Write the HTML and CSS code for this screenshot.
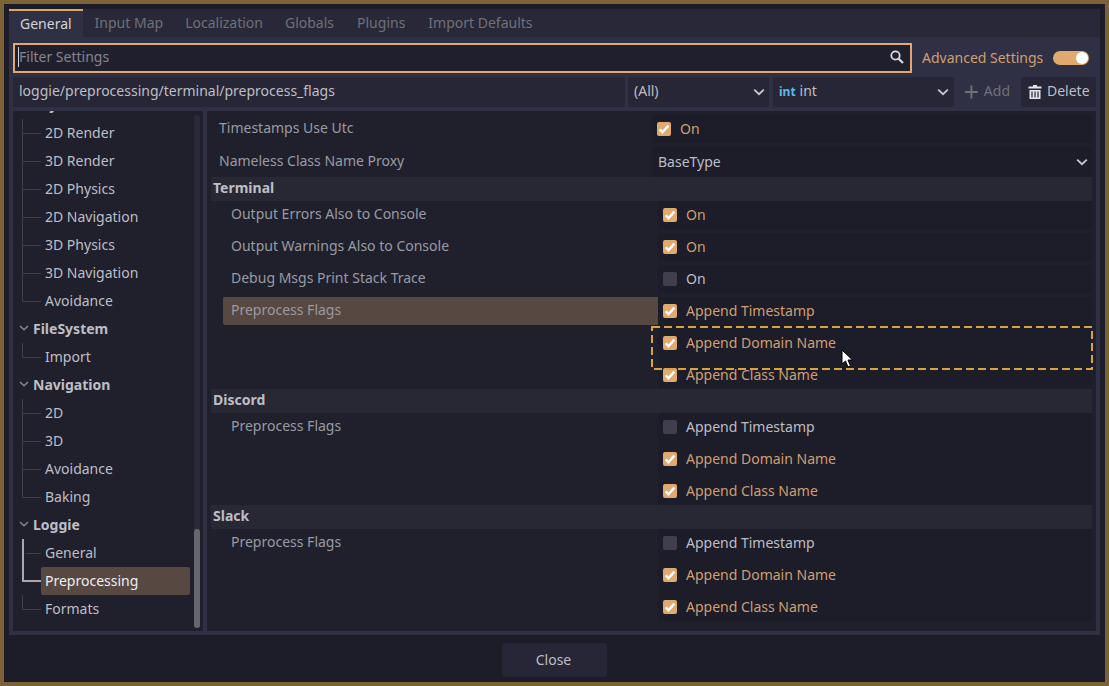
FILE: index.html
```html
<!DOCTYPE html>
<html lang="en">
<head>
  <meta charset="UTF-8" />
  <title>Project Settings</title>
  <link rel="stylesheet" href="styles.css">
</head>
<body>

  <svg class="defs" width="0" height="0">
    <symbol id="tick" viewBox="0 0 14 14">
      <path d="M2.8 7.4 L5.5 10.3 L11.4 3.6" fill="none" stroke="#fff" stroke-width="2.4" />
    </symbol>
    <symbol id="chevron" viewBox="0 0 12 12">
      <path d="M1.2 3.6 L6 8.2 L10.8 3.6" fill="none" stroke="#c8c8cc" stroke-width="1.8" />
    </symbol>
  </svg>

  <div class="window">
    <div class="tabs">
      <div class="tab active">General</div>
      <div class="tab">Input Map</div>
      <div class="tab">Localization</div>
      <div class="tab">Globals</div>
      <div class="tab nudge">Plugins</div>
      <div class="tab nudge">Import Defaults</div>
    </div>

    <div class="panel">
      <div class="toolbar">
        <div class="filter">
          <span class="caret"></span>
          <span class="filter-text">Filter Settings</span>
          <svg class="search" width="16" height="16" viewBox="0 0 16 16">
            <circle cx="6.5" cy="6.5" r="4.2" fill="none" stroke="#dcdce0" stroke-width="1.8" />
            <path d="M9.7 9.7 L14 14" stroke="#dcdce0" stroke-width="2.2" />
          </svg>
        </div>
        <span class="advanced">Advanced Settings</span>
        <span class="toggle"><span class="knob"></span></span>
      </div>

      <div class="toolbar addbar">
        <div class="path">loggie/preprocessing/terminal/preprocess_flags</div>
        <div class="select feature"><span class="select-text">(All)</span><svg class="chev"><use href="#chevron" /></svg></div>
        <div class="select kind"><span class="int-icon">int</span><span class="select-text">int</span><svg class="chev"><use href="#chevron" /></svg></div>
        <div class="add">
          <svg width="16" height="16" viewBox="0 0 16 16"><path d="M8 1 V15 M1 8 H15" stroke="#70707a" stroke-width="2" /></svg>
          <span class="btn-text">Add</span>
        </div>
        <div class="delete">
          <svg width="14" height="16" viewBox="0 0 14 16">
            <path d="M5 1 H9 V2.5 H13.5 V4.5 H.5 V2.5 H5 Z" fill="#e4e4e8" />
            <path d="M1.5 6 H12.5 V15 H1.5 Z" fill="#e4e4e8" />
            <path d="M4 7.5 V13.5 M7 7.5 V13.5 M10 7.5 V13.5" stroke="#262636" stroke-width="1.2" />
          </svg>
          <span class="btn-text">Delete</span>
        </div>
      </div>

      <div class="content">
        <div class="tree">
          <div class="tree-list">
            <div class="tree-head cut"><span class="head-text">Layer Names</span></div>
            <div class="leaf"><span class="branch"></span>2D Render</div>
            <div class="leaf"><span class="branch"></span>3D Render</div>
            <div class="leaf"><span class="branch"></span>2D Physics</div>
            <div class="leaf"><span class="branch"></span>2D Navigation</div>
            <div class="leaf"><span class="branch"></span>3D Physics</div>
            <div class="leaf"><span class="branch"></span>3D Navigation</div>
            <div class="leaf"><span class="branch last"></span>Avoidance</div>
            <div class="tree-head"><svg class="fold"><use href="#chevron" /></svg><span>FileSystem</span></div>
            <div class="leaf"><span class="branch last"></span>Import</div>
            <div class="tree-head"><svg class="fold"><use href="#chevron" /></svg><span>Navigation</span></div>
            <div class="leaf"><span class="branch"></span>2D</div>
            <div class="leaf"><span class="branch"></span>3D</div>
            <div class="leaf"><span class="branch"></span>Avoidance</div>
            <div class="leaf"><span class="branch last"></span>Baking</div>
            <div class="tree-head"><svg class="fold"><use href="#chevron" /></svg><span>Loggie</span></div>
            <div class="leaf"><span class="branch lit"></span>General</div>
            <div class="leaf selected"><span class="branch lit-end"></span><span class="leaf-name">Preprocessing</span></div>
            <div class="leaf"><span class="branch last"></span>Formats</div>
          </div>
          <div class="scrollbar"><div class="thumb"></div></div>
        </div>

        <div class="props">
          <div class="row plain first">
            <div class="label">Timestamps Use Utc</div>
            <div class="value"><span class="check on"><svg><use href="#tick" /></svg></span><span class="opt on-text">On</span></div>
          </div>
          <div class="row plain second">
            <div class="label tall">Nameless Class Name Proxy</div>
            <div class="value dropdown"><span class="opt">BaseType</span><svg class="chev"><use href="#chevron" /></svg></div>
          </div>

          <div class="section">Terminal</div>
          <div class="row">
            <div class="label">Output Errors Also to Console</div>
            <div class="value"><span class="check on"><svg><use href="#tick" /></svg></span><span class="opt on-text">On</span></div>
          </div>
          <div class="row">
            <div class="label">Output Warnings Also to Console</div>
            <div class="value"><span class="check on"><svg><use href="#tick" /></svg></span><span class="opt on-text">On</span></div>
          </div>
          <div class="row">
            <div class="label">Debug Msgs Print Stack Trace</div>
            <div class="value"><span class="check"></span><span class="opt">On</span></div>
          </div>
          <div class="row flags">
            <div class="label picked">Preprocess Flags</div>
            <div class="flag-list">
              <div class="flag"><span class="check on"><svg><use href="#tick" /></svg></span><span class="opt on-text">Append Timestamp</span></div>
              <div class="flag"><span class="check on"><svg><use href="#tick" /></svg></span><span class="opt on-text">Append Domain Name</span></div>
              <div class="flag"><span class="check on"><svg><use href="#tick" /></svg></span><span class="opt on-text">Append Class Name</span></div>
            </div>
          </div>

          <div class="section">Discord</div>
          <div class="row flags">
            <div class="label">Preprocess Flags</div>
            <div class="flag-list">
              <div class="flag"><span class="check"></span><span class="opt">Append Timestamp</span></div>
              <div class="flag"><span class="check on"><svg><use href="#tick" /></svg></span><span class="opt on-text">Append Domain Name</span></div>
              <div class="flag"><span class="check on"><svg><use href="#tick" /></svg></span><span class="opt on-text">Append Class Name</span></div>
            </div>
          </div>

          <div class="section">Slack</div>
          <div class="row flags">
            <div class="label">Preprocess Flags</div>
            <div class="flag-list">
              <div class="flag"><span class="check"></span><span class="opt">Append Timestamp</span></div>
              <div class="flag"><span class="check on"><svg><use href="#tick" /></svg></span><span class="opt on-text">Append Domain Name</span></div>
              <div class="flag"><span class="check on"><svg><use href="#tick" /></svg></span><span class="opt on-text">Append Class Name</span></div>
            </div>
          </div>
        </div>
      </div>
    </div>

    <div class="footer">
      <div class="close">Close</div>
    </div>

    <!-- drop hint and mouse pointer sit on top of the rows -->
    <svg class="drop-hint" width="442" height="44" viewBox="0 0 442 44">
      <rect x="1" y="1" width="440" height="42" fill="none" stroke="#d9a43f" stroke-width="2" stroke-dasharray="8 4" />
    </svg>
    <svg class="pointer" width="13" height="20" viewBox="0 0 13 20">
      <path d="M1 1 V15 L4.5 12 L7 18 L9.5 17 L7 11 H11.5 Z" fill="#fff" stroke="#000" stroke-width="1" />
    </svg>
  </div>

</body>
</html>
```

FILE: styles.css
```css
* {
  box-sizing: border-box;
}
html, body {
  margin: 0;
  padding: 0;
}
body {
  font-family: "Noto Sans", sans-serif;
  font-size: 14px;
  color: #bebec5;
  background: #1d1c29;
}
.defs {
  position: absolute;
}
.window {
  position: relative;
  width: 1109px;
  height: 686px;
  padding: 5px;
  background: #1d1c29;
  border: 4px solid #7d6238;
  display: flex;
  flex-direction: column;
  overflow: hidden;
}

/* tabs */
.tabs {
  display: flex;
  flex: none;
  height: 28px;
  width: 1091px;
  background: #282838;
}
.tab {
  padding: 0 11px;
  line-height: 28px;
  color: #6f7079;
}
.tab.active {
  margin-right: 1px;
  color: #d4d4d8;
  background: #2f3043;
  border-top: 2px solid #dba66c;
  line-height: 25px;
}
.tab.nudge {
  margin-left: 1px;
}

/* main panel */
.panel {
  width: 1091px;
  height: 598px;
  flex: none;
  background: #2f3043;
  padding: 6px 4px 4px;
  display: flex;
  flex-direction: column;
  gap: 4px;
}
.toolbar {
  display: flex;
  align-items: center;
  height: 30px;
  flex: none;
}
.filter {
  width: 899px;
  height: 30px;
  display: flex;
  align-items: center;
  background: #201f2d;
  border: 2px solid #e0a96f;
  padding: 0 3px 2px 3px;
}
.caret {
  width: 1px;
  height: 20px;
  background: #d8d8dc;
}
.filter-text {
  flex: 1;
  margin-bottom: 2px;
  color: #85858d;
}
.search {
  margin-right: 2px;
}
.advanced {
  margin-left: 10px;
  margin-bottom: 2px;
  width: 131px;
  color: #cf9f71;
}
.toggle {
  width: 36px;
  height: 14px;
  border-radius: 7px;
  background: #e0a96f;
  display: flex;
  justify-content: flex-end;
  align-items: center;
  padding-right: 1px;
}
.knob {
  width: 12px;
  height: 12px;
  border-radius: 6px;
  background: #fff;
}

.path, .select {
  height: 30px;
  line-height: 28px;
  background: #262636;
  border-radius: 2px;
}
.path {
  width: 612px;
  padding-left: 6px;
}
.select {
  display: flex;
  align-items: center;
  padding: 0 4px 0 6px;
}
.select-text {
  flex: 1;
  margin-bottom: 2px;
}
.feature {
  width: 141px;
  margin-left: 3px;
}
.kind {
  width: 181px;
  margin-left: 4px;
  padding-right: 5px;
}
.int-icon {
  margin-right: 4px;
  font-size: 12px;
  font-weight: 700;
  color: #5abbef;
}
.chev {
  width: 12px;
  height: 12px;
  flex: none;
}
.add {
  width: 46px;
  margin-left: 10px;
  display: flex;
  align-items: center;
  gap: 5px;
  color: #6f7079;
}
.btn-text {
  margin-bottom: 4px;
}
.delete {
  width: 75px;
  height: 30px;
  margin-left: 11px;
  display: flex;
  align-items: center;
  gap: 5px;
  padding-left: 7px;
  background: #262636;
  border-radius: 2px;
}

/* section tree */
.content {
  display: flex;
  gap: 4px;
  height: 520px;
  flex: none;
}
.tree {
  width: 190px;
  display: flex;
  background: #20202d;
  overflow: hidden;
}
.tree-list {
  width: 177px;
  margin-top: -20px;
}
.leaf, .tree-head {
  height: 28px;
  padding-bottom: 2px;
  line-height: 27px;
  display: flex;
  align-items: center;
}
.tree-head {
  font-weight: 700;
  padding-left: 6px;
}
.tree-head.cut {
  padding-left: 20px;
}
.fold {
  width: 10px;
  height: 10px;
  margin-right: 4px;
  opacity: 0.6;
}
.leaf {
  padding-left: 9px;
}
.branch {
  flex: none;
  align-self: flex-start;
  width: 19px;
  height: 28px;
  margin-right: 4px;
  background:
    linear-gradient(#3f3f4c, #3f3f4c) 0 0 / 1px 100% no-repeat,
    linear-gradient(#3f3f4c, #3f3f4c) 0 14px / 100% 1px no-repeat;
}
.branch.last {
  background:
    linear-gradient(#3f3f4c, #3f3f4c) 0 0 / 1px 15px no-repeat,
    linear-gradient(#3f3f4c, #3f3f4c) 0 14px / 100% 1px no-repeat;
}
.branch.lit {
  background:
    linear-gradient(#a8a8ae, #a8a8ae) 0 0 / 2px 100% no-repeat,
    linear-gradient(#3f3f4c, #3f3f4c) 4px 14px / 15px 1px no-repeat;
}
.branch.lit-end {
  background:
    linear-gradient(#a8a8ae, #a8a8ae) 0 0 / 2px 15px no-repeat,
    linear-gradient(#a8a8ae, #a8a8ae) 0 13px / 100% 2px no-repeat;
}
.leaf.selected {
  color: #eeeef0;
}
.leaf-name {
  align-self: flex-start;
  margin-left: -4px;
  padding-left: 4px;
  width: 149px;
  height: 28px;
  background: #574842;
  border-radius: 2px;
}
.scrollbar {
  width: 6px;
  height: 513px;
  margin: 4px 0 0 4px;
  border-radius: 3px;
  background: #2a2a3a;
  display: flex;
  flex-direction: column;
  justify-content: flex-end;
}
.thumb {
  height: 99px;
  border-radius: 3px;
  background: #66666e;
}

/* inspector */
.props {
  width: 889px;
  background: #20202d;
  padding: 0 4px;
}
.row {
  display: grid;
  grid-template-columns: 447px 434px;
  margin-bottom: 4px;
}
.row.plain {
  grid-template-columns: 441px 440px;
}
.row.first {
  margin-top: 4px;
}
.row.second {
  margin-bottom: 0;
}
.row.flags {
  margin-bottom: 0;
}
.label {
  padding-left: 20px;
  line-height: 26px;
  color: #9a9aa2;
}
.plain .label {
  padding-left: 8px;
}
.label.tall {
  line-height: 28px;
}
.label.picked {
  margin-left: 12px;
  padding-left: 8px;
  height: 28px;
  background: #574842;
  border-radius: 2px 0 0 2px;
}
.value, .flag-list {
  background: #1d1c29;
  border-radius: 2px;
}
.value {
  height: 28px;
  display: flex;
  align-items: center;
  padding-left: 5px;
}
.dropdown {
  height: 30px;
  justify-content: space-between;
  padding-left: 6px;
  padding-right: 4px;
}
.flag-list {
  display: flex;
  flex-direction: column;
  gap: 4px;
  height: 92px;
}
.flag {
  height: 28px;
  display: flex;
  align-items: center;
  padding-left: 5px;
}
.check {
  width: 14px;
  height: 14px;
  margin-right: 9px;
  border-radius: 2px;
  background: #3f3f4d;
  flex: none;
}
.check.on {
  background: #e0a96f;
}
.check svg {
  display: block;
  width: 14px;
  height: 14px;
}
.opt {
  margin-bottom: 2px;
}
.on-text {
  color: #cf9f71;
}
.section {
  height: 24px;
  line-height: 22px;
  padding-left: 2px;
  font-weight: 700;
  background: #282835;
}

/* footer */
.footer {
  display: flex;
  justify-content: center;
  padding-top: 8px;
}
.close {
  width: 105px;
  height: 34px;
  padding-right: 2px;
  line-height: 33px;
  text-align: center;
  background: #262636;
  border-radius: 2px;
}

/* overlays */
.drop-hint {
  position: absolute;
  left: 647px;
  top: 322px;
}
.pointer {
  position: absolute;
  left: 837px;
  top: 345px;
}
```
